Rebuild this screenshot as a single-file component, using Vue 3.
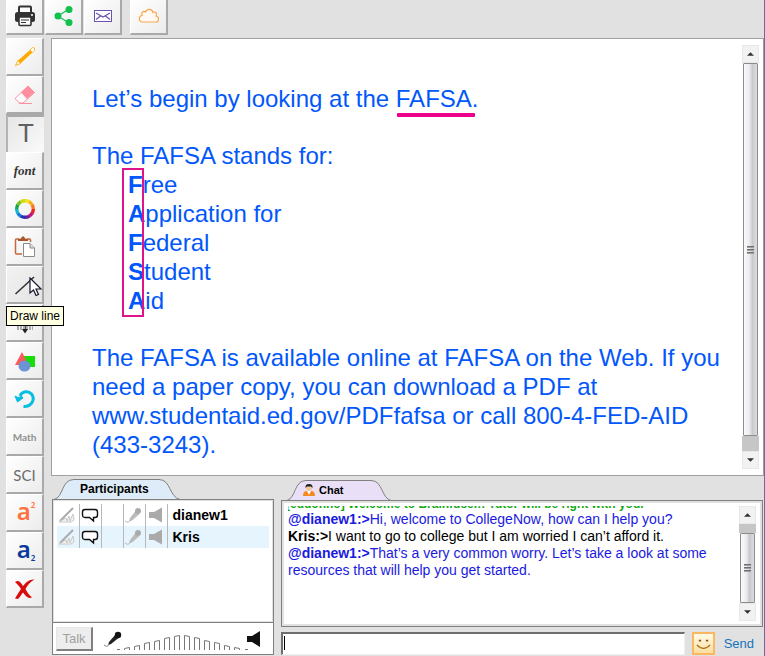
<script setup>
import { ref } from 'vue'

const message = ref('')

const words = [
  ['F', 'ree'],
  ['A', 'pplication for'],
  ['F', 'ederal'],
  ['S', 'tudent'],
  ['A', 'id'],
]

const participants = ['dianew1', 'Kris']

const messages = [
  { kind: 'system', from: '[eduonho]', text: ' Welcome to Brainfuse.!! Tutor will be right with you.' },
  { kind: 'tutor', from: '@dianew1:>', text: 'Hi, welcome to CollegeNow, how can I help you?' },
  { kind: 'student', from: 'Kris:>', text: 'I want to go to college but I am worried I can’t afford it.' },
  { kind: 'tutor', from: '@dianew1:>', text: 'That’s a very common worry. Let’s take a look at some resources that will help you get started.' },
]

const levels = [3, 5, 8, 10, 13, 15, 15, 13, 10, 8, 5, 3]
const bars = levels.map((h, i) => {
  const x = 7 + i * 10
  const left = i < 6 ? h - 1 : h
  const right = i < 6 ? h : h - 1
  return `M${x}.5 19V${19 - left}.5L${x + 5}.5 ${19 - right}.5V19`
})

const wheel = ['#f7e21b', '#fbb116', '#f47b20', '#e8262a', '#c4147c', '#6a1b9a', '#1e2fb8', '#1479e0', '#12b5c9', '#17a84b', '#7cc51e', '#c9dc1c']
const segments = wheel.map((color, i) => {
  const a = (i * 30 - 90) * Math.PI / 180
  const b = (i * 30 - 59) * Math.PI / 180
  return { color, d: `M${12 + 8.3 * Math.cos(a)} ${12 + 8.3 * Math.sin(a)}A8.300 8.300 0 0 1 ${12 + 8.3 * Math.cos(b)} ${12 + 8.3 * Math.sin(b)}` }
})
</script>

<template>
  <div class="page">
    <header class="topbar">
      <button class="tool" type="button" aria-label="Print">
        <svg class="icon" viewBox="0 0 24 24">
          <path d="M6 8V3.500Q6 2.500 7 2.500H17Q18 2.500 18 3.500V8" fill="#fff" stroke="#333" stroke-width="2" />
          <rect x="2" y="8" width="20" height="10" rx="2.500" fill="#333" />
          <circle cx="19" cy="11" r="1" fill="#fff" />
          <rect x="6" y="13" width="12" height="8.500" rx="1" fill="#fff" stroke="#333" stroke-width="1.600" />
          <path d="M8 16H16M8 18.500H13" stroke="#333" stroke-width="1.200" />
        </svg>
      </button>
      <button class="tool" type="button" aria-label="Share">
        <svg class="icon" viewBox="0 0 24 24">
          <path d="M17 5L6 12L17 19" fill="none" stroke="#12c04d" stroke-width="1.200" />
          <circle cx="17" cy="5.500" r="3.500" fill="#12c04d" />
          <circle cx="6" cy="12" r="3.500" fill="#12c04d" />
          <circle cx="17" cy="18.500" r="3.500" fill="#12c04d" />
        </svg>
      </button>
      <button class="tool" type="button" aria-label="Mail">
        <svg class="icon" viewBox="0 0 24 24">
          <rect x="3.500" y="6.500" width="17" height="11" fill="#fff" stroke="#6c52b0" />
          <path d="M5 9L12 13L19 9M5 15.500L9.500 12M19 15.500L14.500 12" fill="none" stroke="#6c52b0" stroke-width="1.200" />
        </svg>
      </button>
      <button class="tool apart" type="button" aria-label="Cloud">
        <svg class="icon" viewBox="0 0 24 24">
          <path d="M5 18C1.500 18 1.500 11.500 5 11.500C4 8.500 6.500 6.500 8.500 8C10 4.500 15 4.500 16 8.500C18.500 7 20.500 9.500 19 12C22.500 12.500 22 18 19 18Z" fill="#fffaf4" stroke="#f9a550" stroke-width="1.200" />
        </svg>
      </button>
    </header>

    <div class="body">
      <nav class="tools" aria-label="Drawing tools">
        <button class="tool" type="button" aria-label="Pencil">
          <svg class="icon" viewBox="0 0 24 24">
            <path d="M2.500 20.500L5 15.500L17 5L19.500 7.500L7.500 18.500Z" fill="#ffaa00" />
            <path d="M2.500 20.500L5 15.500L7.500 18.500Z" fill="#fff" stroke="#ffaa00" stroke-width=".800" />
            <path d="M17 5L19.500 2.500L21.500 3L21.500 5.500L19.500 7.500Z" fill="#fff" stroke="#ffaa00" stroke-width=".800" />
          </svg>
        </button>
        <button class="tool" type="button" aria-label="Eraser">
          <svg class="icon" viewBox="0 0 24 24">
            <path d="M2.500 15L15 3L21.500 9.500L10 20H6.500L2.500 16Z" fill="#fff" stroke="#ff8f9e" />
            <path d="M8 9.500L15 3L21.500 9.500L14 16Z" fill="#ff8f9e" />
            <path d="M6 20.500H19" stroke="#ff8f9e" />
          </svg>
        </button>
        <button class="tool pressed" type="button" aria-pressed="true"><span class="glyph-t">T</span></button>
        <button class="tool" type="button"><span class="glyph-font">font</span></button>
        <button class="tool" type="button" aria-label="Colour">
          <svg class="icon" viewBox="0 0 24 24">
            <path v-for="s in segments" :key="s.color" :d="s.d" fill="none" :stroke="s.color" stroke-width="3.400" />
          </svg>
        </button>
        <button class="tool" type="button" aria-label="Paste">
          <svg class="icon" viewBox="0 0 24 24">
            <path d="M6 4H3.500Q2.500 4 2.500 5V18Q2.500 19 3.500 19H9M14 4H16.500Q17.500 4 17.500 5V7" fill="none" stroke="#c06a3a" stroke-width="1.500" />
            <path d="M5 6V4L8 3.500L9 1.500H11L12 3.500L15 4V6Z" fill="#a9542a" />
            <path d="M10.500 8.500H17L21.500 13V21.500H10.500Z" fill="#fff" stroke="#8a8a8a" />
            <path d="M17 8.500V13H21.500" fill="#ddd" stroke="#8a8a8a" />
          </svg>
        </button>
        <div class="holder">
          <button class="tool hovered" type="button" aria-label="Line" aria-describedby="line-tip">
            <svg class="icon" viewBox="0 0 24 24">
              <path d="M2.500 21L21 4" stroke="#333" stroke-width="1.600" />
            </svg>
          </button>
          <svg class="pointer" viewBox="0 0 14 20">
            <path d="M1 1V16L4.500 13L7 18.500L9.500 17.500L7 12H12Z" fill="#fff" stroke="#16162c" stroke-width="1.200" />
          </svg>
          <span id="line-tip" class="tip" role="tooltip">Draw line</span>
        </div>
        <button class="tool" type="button" aria-label="Arrow">
          <svg class="icon" viewBox="0 0 24 24">
            <path d="M12 3V19" stroke="#222" stroke-width="1.500" />
            <path d="M4 17H20" stroke="#aaa" stroke-width="4" stroke-dasharray="2 1" />
            <path d="M9 18H15L12 22.500Z" fill="#222" />
          </svg>
        </button>
        <button class="tool" type="button" aria-label="Shapes">
          <svg class="icon" viewBox="0 0 24 24">
            <rect x="10" y="7" width="12" height="11" fill="#16df06" />
            <path d="M9 3L14 13L10 16H2Z" fill="#fb5a5a" />
            <ellipse cx="11.500" cy="17" rx="6" ry="5.500" fill="#6a94d4" />
          </svg>
        </button>
        <button class="tool" type="button" aria-label="Undo">
          <svg class="icon" viewBox="0 0 24 24">
            <path d="M7 9C9 4.500 15 3 18.500 7C22.500 12 19 20 10.500 19.500" fill="none" stroke="#06bfe0" stroke-width="3" />
            <path d="M2 9L5 10.500L9 9.500L10 11L4.500 15Z" fill="#06bfe0" stroke="#06bfe0" stroke-linejoin="round" />
          </svg>
        </button>
        <button class="tool" type="button"><span class="glyph-math">Math</span></button>
        <button class="tool" type="button"><span class="glyph-sci">SCI</span></button>
        <button class="tool" type="button" aria-label="Superscript"><span class="script upper">a<sup>2</sup></span></button>
        <button class="tool" type="button" aria-label="Subscript"><span class="script lower">a<sub>2</sub></span></button>
        <button class="tool" type="button" aria-label="Clear">
          <svg class="icon" viewBox="0 0 24 24">
            <path d="M2 5C5 3 7 4 10 9C13 5 17 2 21.500 2.500C17 5 14.500 8 12.500 12C14 15 16 18 19 20.500C15 22 12.500 19 10 15.500C8 18 7 20 5 22L2 21.500C4 18 6 15 8 12C6.500 9 4 7 2 5Z" fill="#d90c0c" />
          </svg>
        </button>
      </nav>

      <main class="workspace">
        <section class="board" aria-label="Whiteboard">
          <div class="notes">
            <p>Let’s begin by looking at the <span class="marked">FAFSA.</span></p>
            <div>
              <p>The FAFSA stands for:</p>
              <ul class="words">
                <li v-for="(w, i) in words" :key="i"><b>{{ w[0] }}</b>{{ w[1] }}</li>
              </ul>
            </div>
            <p>The FAFSA is available online at FAFSA on the Web. If you need a paper copy, you can download a PDF at www.studentaid.ed.gov/PDFfafsa or call 800-4-FED-AID (433-3243).</p>
          </div>
          <div class="scroll">
            <button class="step" type="button" aria-label="Scroll up"><svg viewBox="0 0 8 4"><path d="M4 0L8 4H0Z" /></svg></button>
            <div class="thumb"><i></i><i></i><i></i></div>
            <div class="track"></div>
            <button class="step" type="button" aria-label="Scroll down"><svg viewBox="0 0 8 4"><path d="M0 0H8L4 4Z" /></svg></button>
          </div>
        </section>

        <div class="panels">
          <section class="people">
            <h2 class="tab tab-people">
              <svg viewBox="0 0 126 21">
                <path d="M0 20.500C10 18 7 .500 20 .500H105C117 .500 115 18 126 20.500Z" fill="#ddecf8" stroke="#808080" />
              </svg>
              <span>Participants</span>
            </h2>
            <div class="box people-box">
              <div class="list">
                <table class="roster">
                  <tbody>
                    <tr v-for="name in participants" :key="name">
                      <td>
                        <svg class="mini" viewBox="0 0 18 18">
                          <path d="M2 15L15 2" stroke="#aaa" stroke-width="2" />
                          <path d="M1 16L8 12L9 15L11 10L12 15L15 8L16 14L13 16L9 16Z" fill="#f4f4f4" stroke="#c8c8c8" />
                        </svg>
                      </td>
                      <td>
                        <svg class="mini" viewBox="0 0 18 18">
                          <path d="M4 3.500H14Q16.500 3.500 16.500 6V9Q16.500 11.500 14 11.500H12.500L12.500 15L8.500 11.500H4Q1.500 11.500 1.500 9V6Q1.500 3.500 4 3.500Z" fill="#fff" stroke="#111" stroke-width="1.400" />
                        </svg>
                      </td>
                      <td></td>
                      <td>
                        <svg class="mini" viewBox="0 0 18 18">
                          <path d="M10.500 5L5 12L4 15.500L7 14.500L14 8.500Z" fill="#bbb" />
                          <circle cx="13" cy="5" r="3" fill="#aaa" />
                          <path d="M0 15Q4 18 5 14" fill="none" stroke="#bbb" />
                        </svg>
                      </td>
                      <td>
                        <svg class="mini" viewBox="0 0 18 18">
                          <path d="M2 6H7L15 1.500V16.500L7 12H2Z" fill="#aaa" />
                        </svg>
                      </td>
                      <th scope="row">{{ name }}</th>
                    </tr>
                  </tbody>
                </table>
              </div>
              <div class="voice">
                <button class="talk" type="button" disabled>Talk</button>
                <svg class="mic" viewBox="0 0 18 18">
                  <path d="M11 5L5 12L4 15L7 14L14.500 8Z" fill="#222" />
                  <circle cx="14" cy="5" r="3.200" fill="#111" />
                  <path d="M0 15Q4 18 5 14" fill="none" stroke="#888" />
                </svg>
                <svg class="level" viewBox="0 0 132 20">
                  <path d="M0 18.500H3M128 18.500H131" stroke="#777" />
                  <path v-for="(d, i) in bars" :key="i" :d="d" fill="none" stroke="#777" />
                </svg>
                <svg class="speaker" viewBox="0 0 14 16">
                  <path d="M0 5H5L13 0V16L5 11H0Z" fill="#111" />
                </svg>
              </div>
            </div>
          </section>

          <section class="chat">
            <h2 class="tab tab-chat">
              <svg viewBox="0 0 104 21">
                <path d="M0 20.500C9 18 7 .500 19 .500H84C96 .500 94 18 104 20.500Z" fill="#e9dff6" stroke="#808080" />
              </svg>
              <span>
                <svg class="person" viewBox="0 0 12 14">
                  <path d="M0 13Q0 8 4 8H8Q12 8 12 13Z" fill="#f58a1c" />
                  <path d="M4 8L6 12L8 8Z" fill="#fff" />
                  <circle cx="6" cy="5" r="3" fill="#f3c9a0" />
                  <path d="M2.500 5Q2 1 6 1Q10 1 9.500 5L8 3.500H4Z" fill="#222" />
                </svg>
                Chat
              </span>
            </h2>
            <div class="box chat-box">
              <div class="log">
                <p v-for="(m, i) in messages" :key="i" :class="m.kind"><b>{{ m.from }}</b>{{ m.text }}</p>
              </div>
              <div class="scroll">
                <button class="step" type="button" aria-label="Earlier"><svg viewBox="0 0 8 4"><path d="M4 0L8 4H0Z" /></svg></button>
                <div class="track short"></div>
                <div class="thumb"><i></i><i></i><i></i></div>
                <button class="step" type="button" aria-label="Later"><svg viewBox="0 0 8 4"><path d="M0 0H8L4 4Z" /></svg></button>
              </div>
            </div>
            <form class="compose" @submit.prevent="message = ''">
              <div class="field">
                <input v-model="message" type="text" aria-label="Message">
                <span class="caret"></span>
              </div>
              <button class="smile" type="button" aria-label="Emoticons">
                <svg viewBox="0 0 18 18">
                  <path d="M4 6H6.500M11.500 6H14" stroke="#8a5a14" stroke-width="2" />
                  <path d="M2 10.500Q9 18 16 10.500" fill="none" stroke="#a9701c" stroke-width="1.400" />
                </svg>
              </button>
              <button class="send" type="submit">Send</button>
            </form>
          </section>
        </div>
      </main>
    </div>
  </div>
</template>

<style>
body {
  background: #e1e1e1;
}
</style>

<style scoped>
.page {
  box-sizing: border-box;
  min-height: 100vh;
  display: flex;
  flex-direction: column;
  gap: 3px;
  border-right: 1px solid #7066a0;
  font-family: "Liberation Sans", Arial, sans-serif;
}
.page * {
  box-sizing: border-box;
}
p, h2, ul {
  margin: 0;
  padding: 0;
}
button {
  font-family: inherit;
  margin: 0;
}
svg {
  display: block;
}
.topbar {
  display: flex;
  gap: 1px;
  padding-left: 6px;
}
.tool {
  width: 38px;
  height: 38px;
  padding: 0;
  display: flex;
  align-items: center;
  justify-content: center;
  flex: none;
  border: 1px solid #fff;
  border-right: 2px solid #a9a9a9;
  border-bottom: 2px solid #a9a9a9;
  background: linear-gradient(135deg, #fff, #ececec);
}
.topbar .tool {
  height: 35px;
  padding-bottom: 2px;
  border-top: 0;
}
.topbar .apart {
  margin-left: 7px;
}
.pressed {
  padding-bottom: 4px;
  border: 0;
  border-top: 3px solid #a9a9a9;
  border-left: 2px solid #b4b4b4;
  background: linear-gradient(135deg, #e6e6e6, #fafafa);
}
.hovered {
  background: linear-gradient(135deg, #f2f2f2, #e4e4e4);
}
.icon {
  width: 24px;
  height: 24px;
}
.body {
  flex: 1;
  display: flex;
  gap: 7px;
  padding-left: 6px;
}
.tools {
  display: flex;
  flex-direction: column;
}
.glyph-t {
  font-size: 26px;
  line-height: 30px;
  color: #606060;
}
.glyph-font {
  font: italic bold 13px/20px "Liberation Serif", serif;
  color: #333;
}
.glyph-math {
  font: bold 10px/16px Lato, sans-serif;
  color: #909090;
}
.glyph-sci {
  font: 15px/20px Lato, sans-serif;
  color: #6c6c6c;
}
.script {
  display: flex;
  padding: 0 0 3px 3px;
  font: 600 24px/30px "Noto Sans", sans-serif;
}
.script sup, .script sub {
  font-size: 8px;
  line-height: 12px;
}
.script sup {
  padding-top: 3px;
}
.script sub {
  align-self: flex-end;
}
.upper {
  color: #ff7140;
}
.lower {
  color: #0a3a9c;
}
.holder {
  position: relative;
}
.pointer {
  position: absolute;
  left: 23px;
  top: 11px;
  width: 14px;
  height: 20px;
}
.tip {
  position: absolute;
  left: 0;
  top: 40px;
  z-index: 2;
  padding: 0 3px;
  border: 1px solid #000;
  background: #ffffe1;
  font-size: 12px;
  line-height: 18px;
  white-space: nowrap;
}
.workspace {
  flex: 1;
  min-width: 0;
  display: flex;
  flex-direction: column;
}
.board {
  flex: 1;
  display: flex;
  justify-content: space-between;
  padding: 6px 4px 6px 40px;
  border: 1px solid #a0a0a0;
  background: #fff;
}
.notes {
  display: flex;
  flex-direction: column;
  gap: 28px;
  padding-top: 39px;
  max-width: 640px;
  font-size: 24px;
  line-height: 29px;
  color: #0257fb;
}
.marked {
  position: relative;
}
.marked::after {
  content: "";
  position: absolute;
  left: 1px;
  right: 3px;
  bottom: -5px;
  height: 4px;
  border-radius: 1px;
  background: #ec008c;
}
.words {
  position: relative;
  padding-left: 36px;
  list-style: none;
}
.words::before {
  content: "";
  box-sizing: border-box;
  position: absolute;
  left: 30px;
  top: -2px;
  bottom: -2px;
  width: 22px;
  border: 2px solid #e0148a;
}
.scroll {
  width: 17px;
  flex: none;
  display: flex;
  flex-direction: column;
}
.step {
  height: 18px;
  padding: 0;
  display: flex;
  align-items: center;
  justify-content: center;
  border: 1px solid #e8e8e8;
  background: #f2f2f2;
}
.step svg {
  width: 7px;
  height: 4px;
  fill: #333;
}
.thumb {
  flex: 1;
  margin: 0 1px;
  display: flex;
  flex-direction: column;
  align-items: center;
  justify-content: center;
  gap: 1px;
  border: 1px solid #8c8c8c;
  border-radius: 1px;
  background: linear-gradient(90deg, #fafafa, #ededf0 40%, #c9c9cf 65%, #dcdce0);
}
.thumb i {
  width: 7px;
  height: 2px;
  background: linear-gradient(#555, #bbb);
}
.track {
  height: 15px;
  background: #c6c6c6;
}
.short {
  height: 9px;
}
.panels {
  height: 180px;
  display: grid;
  grid-template-columns: 222px 1fr;
  gap: 7px;
  padding: 3px 1px 1px 1px;
}
.people, .chat {
  min-width: 0;
  display: flex;
  flex-direction: column;
}
.chat {
  padding-top: 1px;
}
.tab {
  display: grid;
  height: 21px;
  margin-bottom: -1px;
}
.tab > * {
  grid-area: 1 / 1;
}
.tab > svg {
  width: 100%;
  height: 21px;
}
.tab > span {
  display: flex;
  align-items: center;
  gap: 4px;
}
.tab-people {
  width: 126px;
  margin-left: 2px;
  font-size: 12px;
  line-height: 20px;
}
.tab-people > span {
  padding: 0 0 1px 26px;
}
.tab-chat {
  width: 104px;
  margin-left: 6px;
  font-size: 11px;
  line-height: 20px;
}
.tab-chat > span {
  padding: 0 0 1px 16px;
}
.person {
  width: 12px;
  height: 14px;
}
.box {
  border: 1px solid #808080;
  background: #fff;
}
.people-box {
  flex: 1;
  display: flex;
  flex-direction: column;
}
.list {
  flex: 1;
  padding: 3px 3px 2px;
  border: 1px solid #e1e1e1;
}
.roster {
  width: 100%;
  table-layout: fixed;
  border-collapse: collapse;
}
.roster tr:nth-child(2) {
  background: #e6f4fe;
}
.roster td {
  width: 22px;
  height: 22px;
  padding: 0 1px;
  border-right: 1px solid #b8b8b8;
}
.roster th {
  padding: 0 0 0 5px;
  text-align: left;
  font-size: 14px;
  line-height: 22px;
}
.mini {
  width: 18px;
  height: 18px;
}
.voice {
  height: 32px;
  display: flex;
  align-items: center;
  padding: 0 12px 0 3px;
  border-top: 1px solid #808080;
}
.talk {
  width: 37px;
  height: 24px;
  padding: 0;
  border: 1px solid #e6e6e6;
  border-right: 2px solid #808080;
  border-bottom: 2px solid #808080;
  background: #ededed;
  color: #a0a0a0;
  font-size: 13px;
}
.mic {
  width: 18px;
  height: 18px;
  margin-left: 11px;
}
.level {
  width: 132px;
  height: 20px;
  margin: 4px -5px 0 -5px;
}
.speaker {
  width: 14px;
  height: 16px;
  margin-left: auto;
}
.chat-box {
  flex: 1;
  min-height: 0;
  display: flex;
  padding: 2px 6px 4px 3px;
  box-shadow: inset 0 0 0 2px #e1e1e1;
}
.chat-box .scroll {
  padding-top: 3px;
  padding-bottom: 1px;
}
.log {
  flex: 1;
  min-width: 0;
  margin: 3px 16px 0 3px;
  overflow: hidden;
  display: flex;
  flex-direction: column;
  font-size: 14px;
  line-height: 17px;
}
.log .system {
  margin: -10px 0 -2px -2px;
  color: #0fa80f;
  font-size: 12px;
  font-weight: bold;
  white-space: nowrap;
}
.tutor {
  color: #1a1ae0;
}
.student {
  color: #000;
}
.compose {
  display: flex;
  align-items: center;
  padding: 5px 9px 0 0;
}
.field {
  position: relative;
  flex: 1;
}
.field input {
  display: block;
  width: 100%;
  height: 23px;
  padding: 0 4px;
  border: 1px solid #f0f0f0;
  border-top: 2px solid #6e6e6e;
  border-left: 2px solid #6e6e6e;
  background: #fff;
  font-size: 13px;
  outline: none;
}
.caret {
  position: absolute;
  left: 3px;
  top: 4px;
  width: 1px;
  height: 14px;
  background: #000;
}
.smile {
  width: 23px;
  height: 23px;
  margin-left: 7px;
  padding: 1px;
  border: 2px solid #fbb860;
  background: linear-gradient(#fffbe8, #fbdfa0);
}
.smile svg {
  width: 17px;
  height: 17px;
}
.send {
  margin-left: 9px;
  padding: 0;
  border: 0;
  background: none;
  color: #1573bd;
  font-size: 13px;
}
</style>
